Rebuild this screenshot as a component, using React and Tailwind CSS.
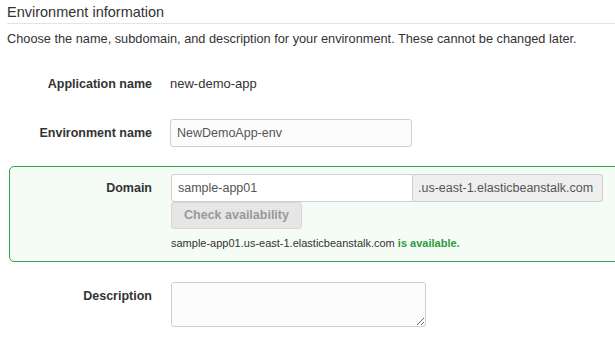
import React from 'react';

const font = { fontFamily: '"Liberation Sans", Arial, sans-serif' };

const App = () => {
  return (
    <div className="w-[615px] h-[350px] overflow-hidden bg-white text-[#333]" style={font}>
      <div className="pl-[7px]">
        <h2 className="text-[14.5px] leading-[20px] pt-[2px] pb-[1px] border-b border-[#e3e3e3]">
          Environment information
        </h2>
        <p className="text-[12.75px] leading-[16px] mt-[7px]">
          Choose the name, subdomain, and description for your environment. These cannot be changed later.
        </p>

        {/* Application name */}
        <div className="flex items-center mt-[23px] h-[28px]">
          <div className="w-[145px] text-right text-[12.5px] font-bold">Application name</div>
          <div className="pl-[18px] text-[13px]">new-demo-app</div>
        </div>

        {/* Environment name */}
        <div className="flex items-center mt-[21px]">
          <div className="w-[145px] text-right text-[12.5px] font-bold">Environment name</div>
          <div className="pl-[18px]">
            <input
              defaultValue="NewDemoApp-env"
              className="w-[242px] h-[28px] px-[6px] text-[12.5px] text-[#555] bg-[#fcfcfc] border border-[#cfcfcf] rounded-[3px] outline-none"
              style={font}
            />
          </div>
        </div>
      </div>

      {/* Domain box */}
      <div className="ml-[9px] mr-[-10px] mt-[19px] h-[96px] border border-[#2fa84a] rounded-[5px] bg-[#f5fcf5]">
        <div className="flex items-start pt-[7px]">
          <div className="w-[142px] text-right text-[12.5px] font-bold leading-[28px]">Domain</div>
          <div className="pl-[19px]">
            <div className="flex">
              <input
                defaultValue="sample-app01"
                className="w-[242px] h-[28px] px-[6px] text-[12.5px] text-[#555] bg-white border border-[#cfcfcf] rounded-l-[3px] outline-none"
                style={font}
              />
              <div className="w-[190px] h-[28px] flex items-center whitespace-nowrap px-[5px] text-[12.5px] text-[#555] bg-[#eeeeee] border border-l-0 border-[#cfcfcf] rounded-r-[3px]">
                .us-east-1.elasticbeanstalk.com
              </div>
            </div>
            <button
              disabled
              className="block w-[131px] h-[27px] text-[12.5px] font-bold text-[#999] bg-[#e6e6e6] border border-[#d6d6d6] rounded-[3px]"
              style={font}
            >
              Check availability
            </button>
            <div className="mt-[7px] text-[11px] leading-[14px] text-[#333] whitespace-nowrap">
              sample-app01.us-east-1.elasticbeanstalk.com{' '}
              <span className="font-bold text-[#2b9a3a]">is available.</span>
            </div>
          </div>
        </div>
      </div>

      {/* Description */}
      <div className="flex items-start mt-[20px] pl-[7px]">
        <div className="w-[145px] text-right text-[12.5px] font-bold leading-[16px] pt-[6px]">Description</div>
        <div className="pl-[19px]">
          <textarea
            className="block w-[255px] h-[45px] bg-[#fcfcfc] border border-[#cfcfcf] rounded-[3px] outline-none"
          />
        </div>
      </div>
    </div>
  );
};

export default App;
